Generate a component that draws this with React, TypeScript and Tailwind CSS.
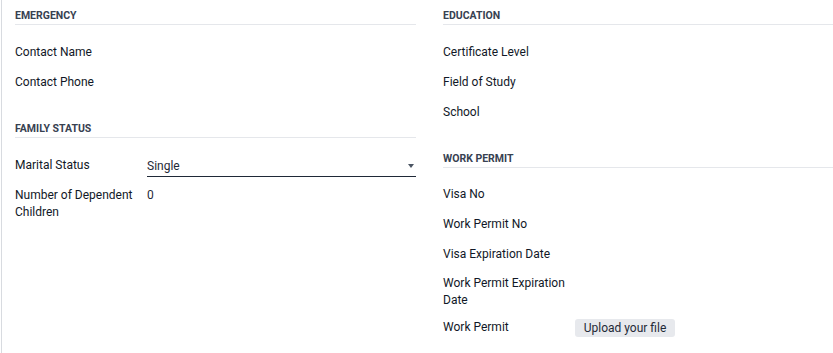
const Header = ({ title }: { title: string }) => (
  <div className="pt-[9px] pb-[1px] border-b border-[#e5e7eb]">
    <h3 className="text-[10.5px] leading-[14px] font-bold uppercase text-[#374151]">
      {title}
    </h3>
  </div>
);

const Row = ({
  label,
  children,
  className = "",
}: {
  label: string;
  children?: React.ReactNode;
  className?: string;
}) => (
  <div className={`flex py-[6.5px] ${className}`}>
    <div className="w-[132px] shrink-0 pr-[8px] leading-[17px] text-[#111827]">
      {label}
    </div>
    <div className="flex-1 leading-[17px]">{children}</div>
  </div>
);

const App = () => {
  return (
    <div
      className="w-[833px] h-[353px] bg-white overflow-hidden"
      style={{ fontFamily: "Roboto, 'Open Sans', sans-serif" }}
    >
      <div className="ml-px h-full border-l border-[#d8dbe0] pl-[13px] flex text-[12px]">
        {/* left column */}
        <div className="w-[401px] shrink-0">
          <Header title="Emergency" />
          <div className="mt-[12px]">
            <Row label="Contact Name" />
            <Row label="Contact Phone" />
          </div>

          <div className="mt-[16px]">
            <Header title="Family Status" />
          </div>
          <div className="mt-[12px]">
            <div className="flex py-[6.5px]">
              <div className="w-[132px] shrink-0 pr-[8px] leading-[17px] text-[#111827]">
                Marital Status
              </div>
              <div className="flex-1 flex items-center justify-between border-b border-[#1f2937] pb-[1px] -mb-[2px] pt-[1px]">
                <span className="leading-[17px] text-[#1f2937]">Single</span>
                <span className="mr-[2px] w-0 h-0 border-l-[3.5px] border-r-[3.5px] border-t-[4px] border-l-transparent border-r-transparent border-t-[#4b5563]" />
              </div>
            </div>
            <Row label="Number of Dependent Children" className="pt-[6px]">
              <span className="text-[#1f2937]">0</span>
            </Row>
          </div>
        </div>

        {/* right column */}
        <div className="ml-[27px] flex-1">
          <Header title="Education" />
          <div className="mt-[12px]">
            <Row label="Certificate Level" />
            <Row label="Field of Study" />
            <Row label="School" />
          </div>

          <div className="mt-[16px]">
            <Header title="Work Permit" />
          </div>
          <div className="mt-[11px]">
            <Row label="Visa No" />
            <Row label="Work Permit No" />
            <Row label="Visa Expiration Date" className="pb-[5.5px]" />
            <Row label="Work Permit Expiration Date" className="pb-[3px]" />
            <div className="flex items-start pt-[7px]">
              <div className="w-[132px] shrink-0 pr-[8px] leading-[17px] text-[#111827]">
                Work Permit
              </div>
              <button className="h-[18px] w-[100px] rounded-[3px] bg-[#e7e9ed] text-[#1f2937] text-[12px] leading-[18px]">
                Upload your file
              </button>
            </div>
          </div>
        </div>
      </div>
    </div>
  );
};

export default App;
